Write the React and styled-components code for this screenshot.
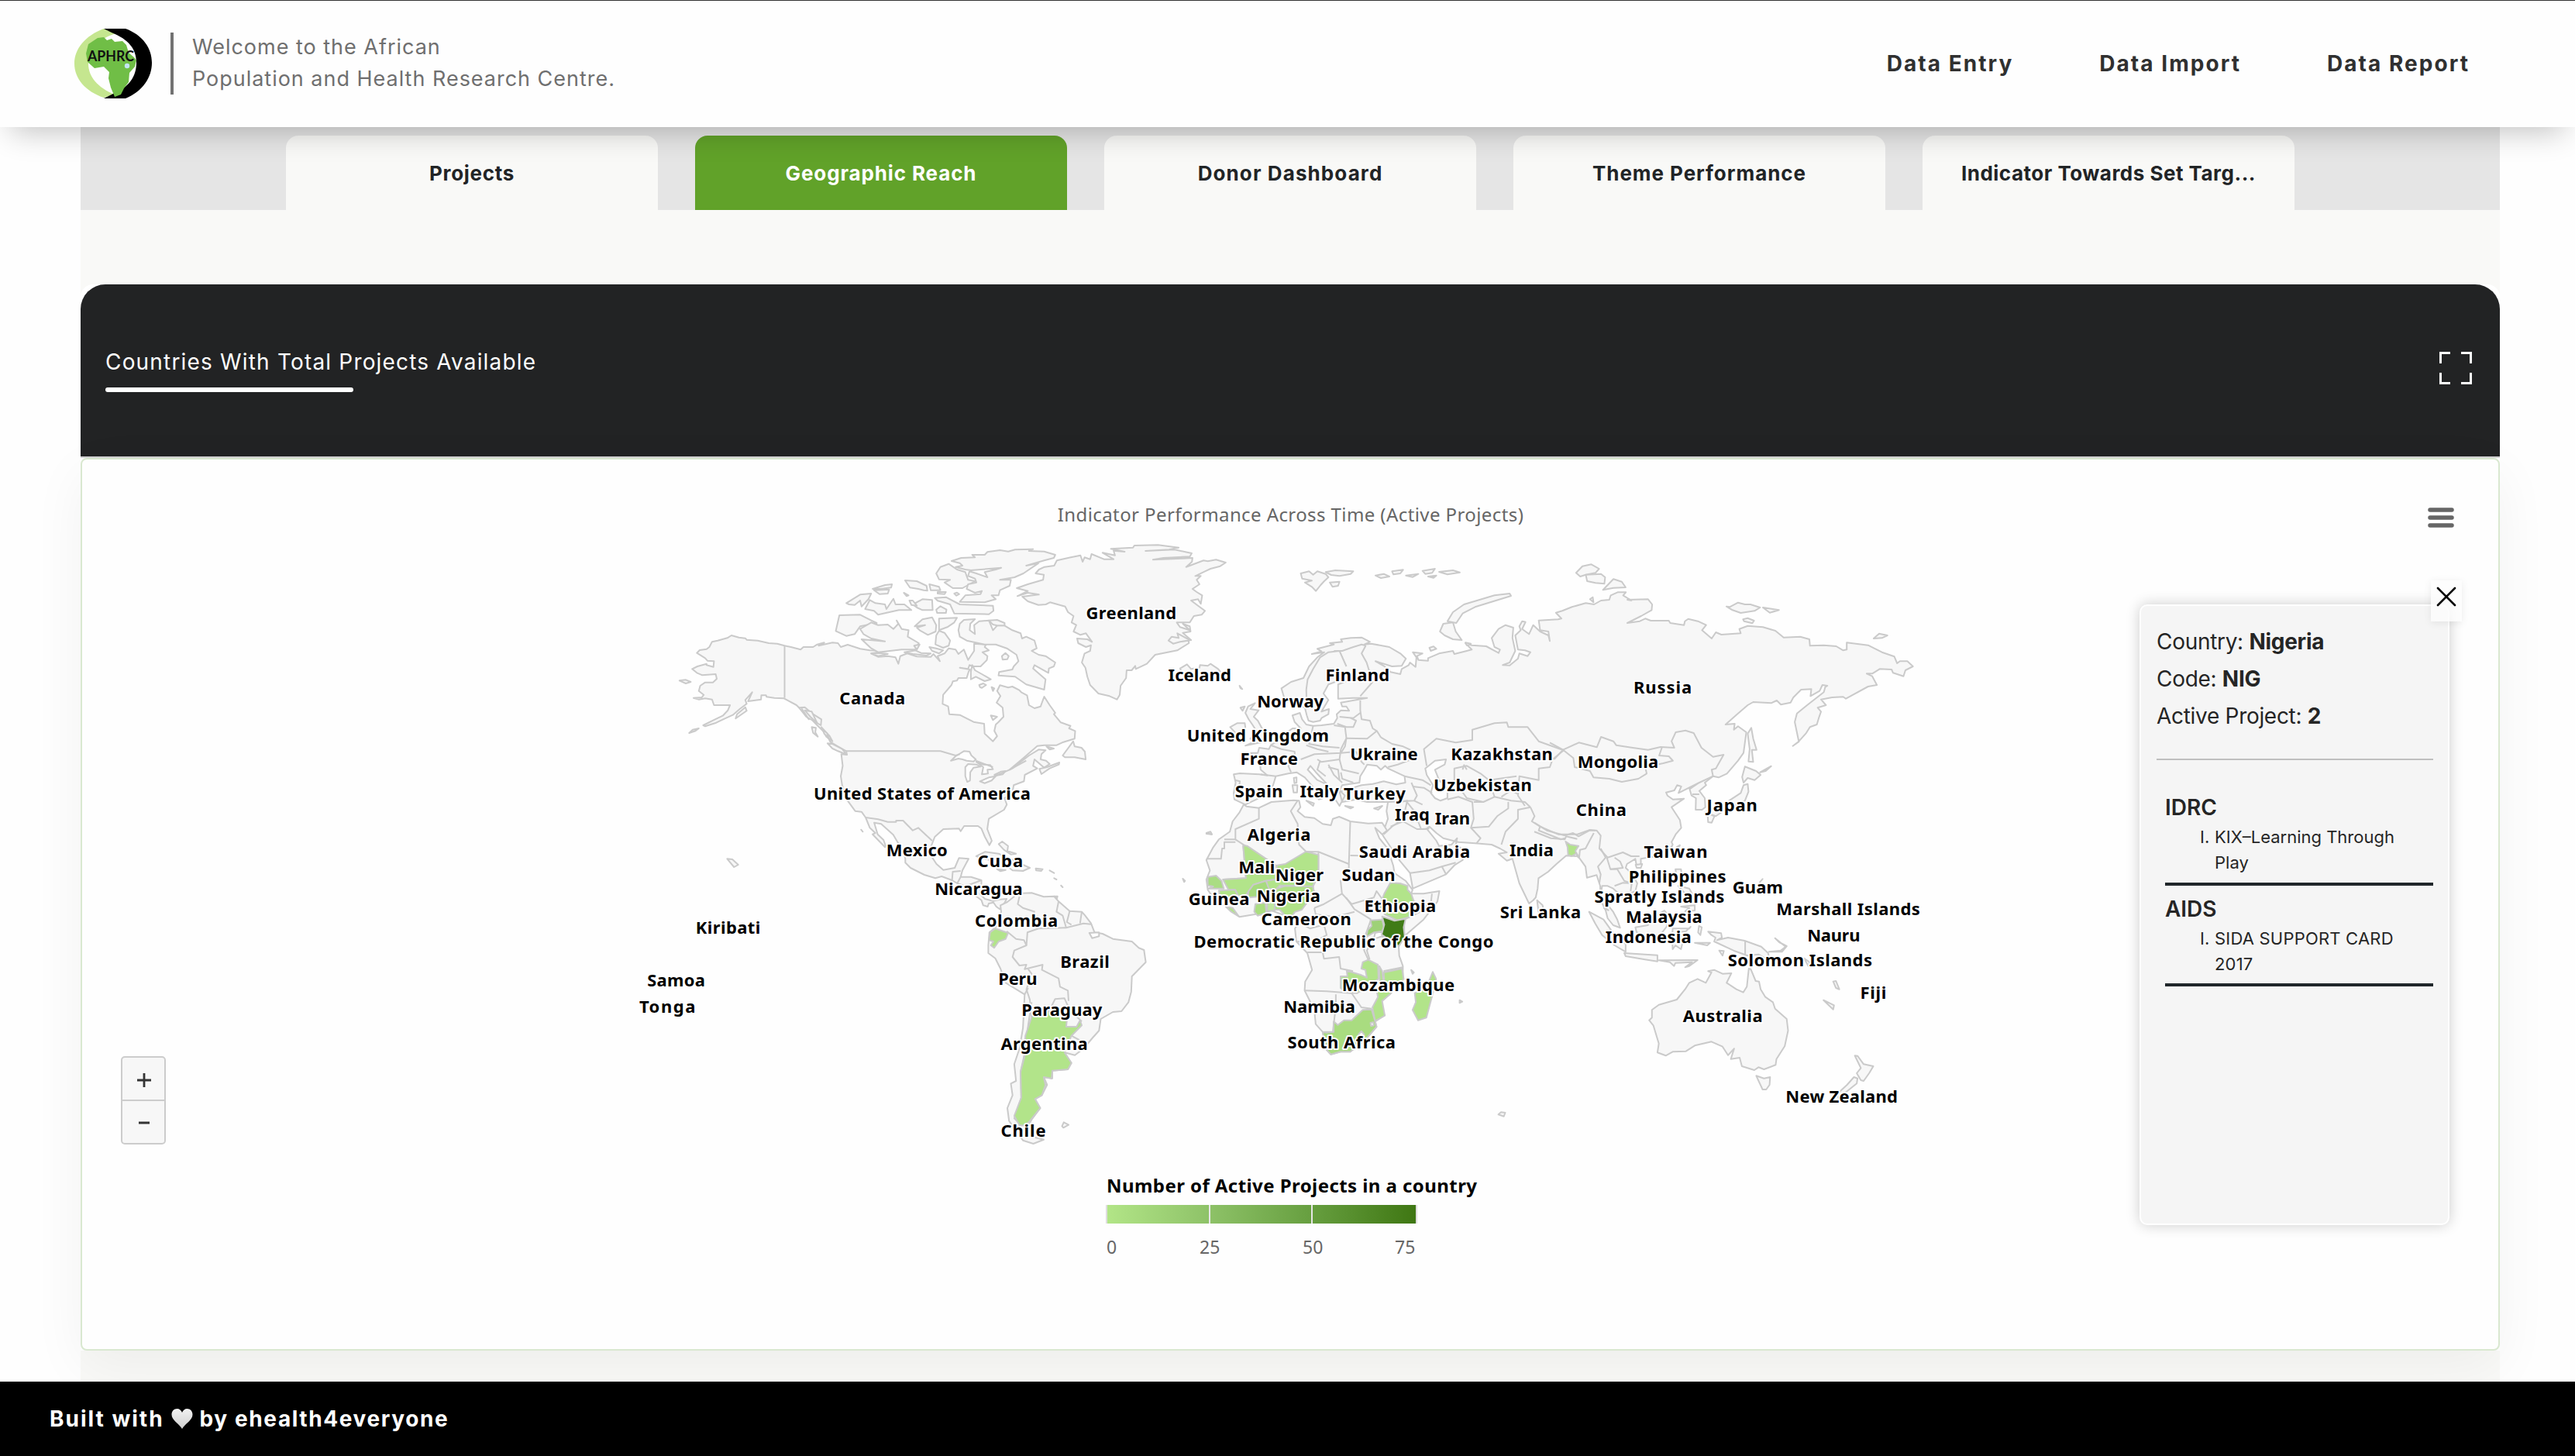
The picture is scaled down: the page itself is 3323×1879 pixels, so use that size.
import React from "react";
import styled, { createGlobalStyle } from "styled-components";

const GlobalStyle = createGlobalStyle`
  * { box-sizing: border-box; }
  body {
    margin: 0;
    background: #fefefe;
    color: #222426;
    font-family: Inter, "Noto Sans", sans-serif;
    overflow: hidden;
  }
`;

const Page = styled.div`
  display: flex;
  flex-direction: column;
  width: 3323px;
  height: 1879px;
  overflow: hidden;
`;

const Header = styled.header`
  display: flex;
  align-items: center;
  flex: 0 0 164px;
  padding: 0 138px 2px 96px;
  background: #fefefe;
  border-top: 1px solid #333;
  box-shadow: 0 20px 36px -14px rgba(0, 0, 0, 0.24);
  position: relative;
  z-index: 2;
`;

const Logo = styled.svg`
  width: 100px;
  height: 90px;
`;

const Divider = styled.div`
  width: 4px;
  height: 80px;
  margin: 0 24px 0 24px;
  background: #727272;
`;

const Welcome = styled.p`
  margin: 0 0 2px;
  font-size: 27px;
  line-height: 41px;
  letter-spacing: 0.98px;
  color: #6f6f6f;
`;

const Nav = styled.nav`
  display: flex;
  gap: 113px;
  margin-left: auto;
`;

const NavLink = styled.a`
  font-size: 28px;
  font-weight: 700;
  letter-spacing: 2.05px;
  margin-right: -2.05px;
  color: #303030;
`;

const Main = styled.main`
  display: flex;
  flex-direction: column;
  flex: 1;
  margin: 0 97px 0 104px;
  background: #f9f9f7;
  min-height: 0;
`;

const TabBar = styled.div`
  display: flex;
  align-items: flex-end;
  justify-content: center;
  gap: 48px;
  height: 107px;
  background: #e5e5e5;
`;

const Tab = styled.button`
  width: 480px;
  height: 96px;
  border: 0;
  border-radius: 16px 16px 0 0;
  font: 700 26px Inter, sans-serif;
  letter-spacing: ${(p) => p.$spacing}px;
  color: ${(p) => (p.$active ? "#fff" : "#212426")};
  background: ${(p) => (p.$active ? "#61a229" : "#f9f9f7")};
`;

const Card = styled.section`
  display: flex;
  flex-direction: column;
  height: 1376px;
  margin-top: 96px;
  background: #fff;
  border-radius: 16px 16px 0 0;
`;

const CardHeader = styled.div`
  display: flex;
  align-items: center;
  justify-content: space-between;
  height: 224px;
  padding: 0 36px 6px 32px;
  background: #222324;
  border-bottom: 2px solid #d2d2d2;
  border-radius: 32px 32px 0 0;
`;

const CardTitle = styled.h2`
  margin: 0;
  padding-bottom: 3px;
  font-size: 28px;
  font-weight: 400;
  line-height: 52px;
  letter-spacing: 1.18px;
  color: #fff;

  &::after {
    content: "";
    display: block;
    width: 320px;
    height: 6px;
    margin-top: 7px;
    border-radius: 3px;
    background: #fff;
  }
`;

const ExpandIcon = styled.svg`
  width: 42px;
  height: 42px;
`;

const ChartPanel = styled.div`
  display: flex;
  flex-direction: column;
  flex: 1;
  background: #fefefe;
  border: 2px solid #d9e8d0;
  border-radius: 8px;
  box-shadow: 0 20px 70px rgba(0, 0, 0, 0.05);
`;

const ChartHead = styled.div`
  display: grid;
  grid-template-columns: 1fr auto 1fr;
  align-items: end;
  height: 97px;
  padding: 0 57px 8px 57px;
`;

const ChartTitle = styled.h3`
  grid-column: 2;
  margin: 0 0 1px 1px;
  font: 400 24px/34px "Noto Sans", sans-serif;
  letter-spacing: 0.41px;
  color: #666;
`;

const MenuIcon = styled.svg`
  justify-self: end;
  width: 34px;
  height: 28px;
`;

const ChartBody = styled.div`
  display: grid;
  grid-template-columns: 694px 1700px 1fr;
  grid-template-rows: 808px;
  height: 808px;
`;

const ZoomGroup = styled.div`
  align-self: end;
  margin: 0 0 21px 50px;
  width: 58px;
  border: 2px solid #ccc;
  border-radius: 5px;
  background: #f7f7f7;
  overflow: hidden;
`;

const ZoomButton = styled.button`
  display: flex;
  align-items: center;
  justify-content: center;
  width: 100%;
  height: 54px;
  padding: 3px 0 0 2px;
  border: 0;
  background: transparent;

  & + & {
    height: 56px;
    padding-top: 2px;
    border-top: 2px solid #ccc;
  }
`;

const Map = styled.svg`
  width: 1700px;
  height: 808px;
  overflow: visible;
  stroke: #cacaca;
  stroke-width: 2;
  stroke-linejoin: round;
`;

const MapLabel = styled.text`
  font: 700 22px "Noto Sans", sans-serif;
  fill: #000;
  stroke: #fff;
  stroke-width: 4px;
  paint-order: stroke;
`;

const PanelWrap = styled.div`
  position: relative;
  width: 400px;
  height: 801px;
  margin: 90px 0 0 261px;
`;

const Panel = styled.aside`
  height: 801px;
  padding: 22px 19px 0 20px;
  background: #f5f5f5;
  border: 2px solid #fff;
  border-radius: 10px;
  box-shadow: 0 0 18px rgba(0, 0, 0, 0.2);
`;

const CloseButton = styled.button`
  position: absolute;
  top: -31px;
  right: -16px;
  width: 40px;
  height: 53px;
  padding: 0;
  border: 0;
  background: rgba(252, 252, 252, 0.8);
  box-shadow: 0 2px 10px rgba(0, 0, 0, 0.08);

  svg { display: block; margin: -12px auto 0; }
`;

const Fact = styled.div`
  font-size: 28px;
  line-height: 48px;
  letter-spacing: -0.3px;
  color: #252525;
`;

const Rule = styled.div`
  height: 2px;
  margin: 31px 0 40px;
  background: #bfbfbf;
`;

const Donor = styled.div`
  height: ${(p) => p.$height}px;
  margin-left: 11px;
  padding-top: ${(p) => p.$top}px;
  border-bottom: 4px solid #20262a;
`;

const DonorName = styled.div`
  font-size: 28px;
  font-weight: 600;
  line-height: 43px;
  color: #252525;
`;

const ProjectRow = styled.div`
  display: grid;
  grid-template-columns: 19px 1fr;
  padding: 0 30px 0 45px;
  font-size: 22px;
  line-height: 33px;
  letter-spacing: ${(p) => p.$spacing || 0}px;
  color: #252525;
`;

const Legend = styled.div`
  display: flex;
  flex-direction: column;
  width: 480px;
  margin: 15px 0 0 1322px;
`;

const LegendTitle = styled.div`
  font: 700 24px/34px "Noto Sans", sans-serif;
  letter-spacing: 0.43px;
  color: #000;
  white-space: nowrap;
`;

const Ramp = styled.div`
  display: grid;
  grid-template-columns: 133px 132px 133px;
  width: 402px;
  height: 24px;
  margin: 8px 0 0 -1px;
  border: solid #dedede;
  border-width: 0 2px;
  background: linear-gradient(90deg, #b2e587, #8fc369 32%, #69a142 64%, #3f7713);
`;

const RampCell = styled.div`
  border-right: ${(p) => (p.$last ? "0" : "2px solid #e6e6e6")};
`;

const RampLabels = styled.div`
  display: grid;
  grid-template-columns: 120px 133px 119px 30px;
  margin-top: 13px;
  font: 400 23px/34px "Noto Sans", sans-serif;
  color: #666;
`;

const Footer = styled.footer`
  display: flex;
  align-items: center;
  gap: 9px;
  flex: 0 0 96px;
  padding-left: 64px;
  background: #000;
  color: #fff;
  font-size: 28px;
  font-weight: 700;
  position: relative;
  z-index: 2;
`;

const FooterText = styled.span`
  letter-spacing: ${(p) => p.$spacing}px;
`;

/* Every sheet has its own origin and x/y scale; a sheet letter in a
   coordinate string switches the points that follow it. */
const SHEETS = {
  A: [860, 680, 2.8, 3],
  B: [1080, 680, 2.8, 3],
  C: [1500, 780, 2.8, 3],
  D: [2000, 700, 2.8, 3],
  E: [800, 1060, 2.24, 3],
  F: [1480, 1020, 2.8, 3],
  G: [1980, 1040, 2.8, 3],
};

function trace(source, close) {
  let sheet = SHEETS.A;
  const points = [];
  source.trim().split(/\s+/).forEach((token) => {
    if (SHEETS[token]) {
      sheet = SHEETS[token];
      return;
    }
    const [x, y] = token.split(",").map(Number);
    points.push(`${(sheet[0] + x / sheet[2]).toFixed(1)} ${(sheet[1] + y / sheet[3]).toFixed(1)}`);
  });
  return `M${points.join("L")}${close ? "Z" : ""}`;
}

const LAND = [
  // North and Central America
  `A 427,460 400,452 370,450 330,440 290,437 285,431 262,428 235,420 220,430 185,440 165,445 155,465 145,473 120,477 110,488 140,508 148,518 172,520 170,542 145,535 145,530 112,540 93,550 110,565 130,574 178,570 182,588 168,602 140,602 122,615 117,635 135,650 128,660 98,662 118,668 140,664 165,668 172,690 200,690 230,690 222,710 205,730 170,748 133,768 140,772 180,758 205,745 240,728 265,705 290,685 285,670 310,640 295,675 342,668 343,652 360,652 362,658 390,662 425,664 470,690 490,712 520,740 545,768 580,805 592,832 620,850 650,868 652,882 632,880 637,925 630,965 635,1000 655,1060 682,1100 705,1103 720,1125 735,1165 755,1185 745,1190 790,1240 E 768,95 762,72 745,50 735,5 755,10 790,52 820,120 825,145 825,160 840,180 880,207 912,220 930,213 960,228 975,240 1000,252 1025,285 1045,305 1050,325 1063,330 1066,318 1080,314 1088,330 1098,340 1110,320 1118,300 1098,302 1078,308 1055,300 1040,280 1045,240 1045,228 1015,215 985,215 990,190 1000,165 1008,145 980,142 968,180 935,188 915,165 903,140 900,95 910,60 935,30 980,28 985,38 995,18 1035,18 1045,28 1055,60 1068,92 1075,75 1062,30 A 1162,1150 1165,1130 1220,1095 1230,1075 1222,1050 1250,1030 1255,1000 1292,985 1295,960 1340,935 1325,925 1330,900 1365,932 1385,918 1372,905 1352,900 1355,880 1370,865 1345,862 1310,885 1250,935 1240,940 1290,895 1340,848 1365,845 1410,845 1430,835 1475,820 1477,790 1455,780 1460,770 1425,757 1400,725 1405,720 1385,690 1365,657 1352,695 1330,702 1310,690 1303,652 1282,640 1275,632 1250,618 1235,622 1205,613 1195,635 1207,655 1193,680 1215,700 1218,735 1200,755 1190,765 1185,790 1195,810 1180,830 1150,800 1148,762 1110,755 1060,728 1022,725 1018,695 998,685 1000,650 1030,612 1035,598 1050,595 1055,585 1085,585 1092,560 1097,552 1060,545 1090,550 1095,535 1110,540 1135,540 1158,515 1160,500 1142,485 1165,478 1150,465 1155,455 1112,452 1112,480 1090,515 1075,475 1055,492 1045,475 1020,470 1005,490 980,500 988,520 965,492 955,503 905,502 870,490 845,500 838,530 828,505 800,500 765,503 740,490 800,480 735,478 700,472 655,456 630,465 620,450 600,448 550,460 570,448 545,455 530,465 495,465 485,475 450,465`,
  `A 625,342 700,340 740,362 760,372 700,385 680,415 650,422 612,403`,
  `A 740,370 765,380 800,378 820,395 838,375 832,362 850,395 875,400 872,425 912,450 900,475 850,475 765,485 740,470 705,435 790,443 740,432 712,415 700,395`,
  `A 650,295 700,262 740,258 730,280 705,308 700,285 680,302 660,300`,
  `A 718,318 735,283 755,295 790,300 795,318 820,278 828,300 860,300 885,322 840,322 765,340 750,325`,
  `A 745,240 790,225 815,222 812,235 775,240`, `A 750,245 805,242 800,258 770,260`,
  `A 862,207 905,210 940,228 943,247 930,245 910,240 880,235`, `A 950,222 985,232 990,245 955,245`,
  `A 858,255 875,265 868,268`, `A 980,252 1010,252 1005,260 980,258`, `A 1040,258 1050,254 1058,260 1048,266`,
  `A 975,180 990,155 1020,143 1050,165 1080,175 1090,205 1115,210 1070,237 1035,237 1005,215 1025,205 985,203`,
  `A 1030,132 1065,120 1115,118 1105,108 1150,108 1160,97 1205,90 1235,95 1260,88 1325,86 1310,93 1365,95 1405,108 1400,120 1365,130 1300,150 1345,140 1290,180 1258,195 1205,205 1245,205 1240,228 1205,245 1200,265 1175,265 1190,280 1150,292 1060,290 1080,265 1135,260 1140,248 1115,255 1085,240 1090,222 1120,215 1115,200 1090,190 1095,172 1120,180 1160,195 1150,175 1190,165 1210,158 1100,168 1080,165 1045,155 1070,150 1060,140`,
  `A 970,275 1010,272 1060,300 1180,305 1182,325 1165,338 1040,335 1025,300 1000,292 980,286`,
  `A 890,300 925,280 960,283 962,322 925,322 905,312 `, `A 878,285 890,285 905,305 885,302`,
  `A 975,320 990,307 1012,320 1010,333 978,333`,
  `A 897,385 925,358 960,350 975,380 973,405 945,418 915,400 905,390 935,380`,
  `A 985,355 1050,352 1040,370 1015,388 985,400`,
  `A 985,402 1005,410 1025,440 1020,460 1000,468 972,455 975,420`,
  `A 1055,400 1060,375 1075,360 1115,357 1098,375 1096,400 1115,415 1112,380 1130,365 1165,362 1180,400 1195,382 1222,382 1250,400 1280,412 1285,432 1300,425 1330,440 1338,470 1320,480 1345,495 1370,500 1405,525 1400,540 1382,548 1380,565 1330,535 1325,548 1370,590 1365,630 1300,610 1260,580 1200,575 1202,562 1250,552 1255,540 1272,520 1265,495 1230,470 1190,455 1150,455 1085,440 1060,425`,
  `A 1165,362 1195,360 1222,372 1222,382 1195,382 1180,378`,
  `A 1105,535 1115,555 1140,570 1172,590 1150,597 1118,580 1100,590 1100,560`,
  `A 1130,612 1145,606 1155,612 1140,623 1133,620`, `A 1212,500 1225,488 1237,500 1232,512 1215,514`, `A 1175,620 1185,625 1180,635`, `A 1172,730 1195,735 1180,748`,
  `A 740,490 770,488 800,492 765,500`, `A 860,485 900,478 920,488 955,490 940,498 890,492`, `A 895,460 915,455 905,475`, `A 950,465 975,470 1000,478 985,490 960,480`,
  `A 1432,885 1470,830 1475,850 1500,855 1512,870 1515,900 1475,892 1440,892`,
  `A 1348,937 1375,930 1420,912 1418,920 1385,935 1355,957`,
  `A 1373,850 1400,858 1385,862`,
  `A 582,838 600,840 635,860 652,882 620,868 600,858`, `A 47,595 70,592 88,600 70,606`, `A 82,798 95,785 117,780 105,790`, `A 250,742 255,725 285,698 290,712`, `A 525,775 540,778 538,795 547,812 530,797`,
  `A 480,700 500,698 530,725 560,745 558,768 530,750 505,735`, `A 500,710 525,715 545,760 520,735`, `A 490,705 515,745 500,725`, `A 560,775 590,810 600,830 578,812`, `A 565,785 580,798 588,820 570,800`,
  // Greenland and Iceland
  `B 650,237 690,222 745,205 748,185 718,180 730,165 750,155 785,150 795,130 845,118 880,110 888,135 895,118 915,125 920,105 965,125 1000,125 960,100 1005,110 1000,92 1040,96 990,85 1070,80 1075,72 1160,70 1235,80 1200,88 1115,93 1220,88 1282,102 1275,115 1180,120 1142,127 1250,122 1285,120 1283,135 1262,155 1325,130 1340,133 1370,127 1405,138 1385,152 1350,162 1330,172 1295,190 1315,190 1300,205 1310,222 1285,240 1300,252 1320,265 1315,298 1305,280 1280,285 1305,305 1330,325 1318,340 1290,345 1275,370 1228,370 1240,388 1275,400 1250,375 1275,385 1278,405 1250,410 1280,438 1240,445 1215,452 1198,440 1210,425 1235,430 1230,412 1270,435 1272,450 1230,478 1150,495 1120,530 1080,550 1078,538 1065,555 1047,555 1045,585 1025,615 1022,650 1012,668 985,655 945,645 915,612 905,580 898,545 885,525 895,490 915,480 918,458 900,465 872,450 868,432 905,435 922,445 900,412 880,418 855,405 865,380 848,370 855,345 835,330 825,308 770,292 755,300 728,302 690,288 670,270 730,262 690,255 652,268 690,248`,
  `B 1240,548 1265,532 1280,550 1310,545 1312,535 1340,538 1350,530 1378,550 1385,560 1340,580 1280,582 1245,560`,
  `B 1455,615 1465,628 1458,624`, `B 1335,1188 1350,1182 1355,1190`,
  // British Isles and Mediterranean islands
  `C 310,395 335,382 318,405 348,410 330,435 345,450 360,480 378,500 372,530 300,547 335,530 318,520 340,490 325,465 312,445 300,420`,
  `C 245,475 270,460 298,460 300,475 290,520 255,525 262,495`, `C 282,400 298,395 290,412`,
  `C 475,672 485,670 485,690 477,692`, `C 470,700 488,700 487,728 474,728`, `C 520,760 548,770 545,780`, `C 660,780 690,785 680,790`, `C 765,790 795,780 780,795`,
  // Europe, Asia
  `C 258,658 280,654 350,658 380,662 355,640 352,600 330,590 318,575 345,575 350,555 385,560 392,545 430,520 445,500 470,480 500,480 478,455 470,430 497,420 505,445 520,465 545,470 575,468 620,462 632,440 630,425 645,410 675,412 665,395 650,395 645,380 700,370 740,362 690,362 635,365 635,310 680,290 650,270 628,290 625,300 600,310 582,345 600,370 575,415 602,405 600,425 575,440 570,450 545,455 528,450 522,430 515,400 440,360 430,325 465,300 510,285 530,240 560,205 585,185 540,192 575,182 560,172 620,155 605,150 650,145 645,135 680,130 720,128 750,145 730,155 755,152 820,165 860,190 880,210 865,238 830,240 770,220 800,238 825,262 860,270 865,250 890,235 895,225 915,242 918,205 905,185 940,190 920,200 925,215 960,218 960,208 1000,190 1050,180 1055,192 1100,180 1118,175 1095,150 1118,158 1170,162 1215,188 1220,175 1200,165 1190,130 1215,95 1240,80 1268,90 1265,130 1275,180 1255,225 1230,235 1255,236 1285,210 1290,190 1320,200 1330,185 1310,178 1285,175 1275,120 1295,100 1290,85 1300,65 1312,68 1300,95 1325,115 1340,80 1365,105 1395,120 1400,142 1395,105 1365,100 1360,62 1430,58 D 42,295 22,272 45,265 80,250 130,235 160,240 185,225 215,222 220,205 245,193 275,193 265,205 295,225 280,222 355,220 370,240 368,262 330,285 280,312 325,305 345,295 365,303 430,303 435,312 485,320 488,305 500,296 535,305 565,320 550,340 585,372 600,348 620,357 690,352 685,335 715,323 770,328 815,342 845,368 905,365 938,375 940,400 990,398 1035,402 1060,418 1073,415 1073,388 1150,398 1200,425 1245,442 1255,468 1265,460 1292,460 1312,480 1285,495 1278,518 1240,505 1235,492 1192,490 1165,508 1145,508 1165,518 1182,552 1150,558 1070,605 1060,598 1020,600 980,608 998,630 968,640 980,655 972,680 965,705 940,715 925,740 900,770 878,788 900,772 885,695 893,662 930,630 990,580 995,560 1003,555 985,552 975,575 942,595 945,568 908,570 880,600 870,620 835,628 820,612 800,622 735,618 715,630 680,662 635,705 668,702 665,725 680,712 710,735 700,815 680,845 640,895 610,910 590,905 560,930 565,940 540,962 560,990 562,1025 550,1035 527,1035 528,990 512,980 505,955 540,930 465,970 475,945 460,940 450,960 420,968 425,980 445,995 485,992 440,1025 455,1050 470,1075 475,1105 455,1130 440,1160 G 500,150 485,180 440,195 385,205 385,225 370,235 365,205 335,225 330,240 355,265 372,300 365,330 335,345 320,355 305,340 285,320 265,310 245,310 240,345 255,370 285,410 300,440 310,472 285,462 265,435 258,405 240,365 238,310 225,268 190,278 185,235 165,205 155,195 115,193 80,225 50,255 15,280 12,320 5,355 C 1340,1145 1325,1158 1290,1080 1265,985 1245,992 1215,965 1245,960 1220,945 1190,930 1130,925 1070,920 1015,905 990,885 965,860 955,868 990,915 1000,935 1045,930 1065,905 1060,930 1095,955 1085,990 1055,1010 1025,1045 905,1100 895,1040 860,995 800,900 795,890 815,830 810,800 815,765 740,765 700,755 650,765 640,725 720,700 760,695 800,685 845,697 878,690 875,665 815,635 805,625 790,640 775,625 740,620 730,640 715,665 712,690 650,700 640,720 660,740 640,780 625,755 605,710 590,690 555,650 535,625 525,640 560,680 600,700 590,720 575,712 580,750 565,755 555,720 515,670 485,650 455,655 410,665 400,700 380,730 340,755 300,775 260,755 258,730 265,690`,
  `C 1003,105 1015,75 1050,70 1060,105 1082,138 1050,135 1020,120`, `C 1030,65 1050,30 1090,0 1200,-35 1255,-42 1260,-33 1130,10 1085,35 1062,72`,
  `C 965,168 980,163 990,172 970,180`, `C 1095,148 1115,152 1100,158`,
  `D 95,118 118,92 150,85 178,102 165,118 130,125 110,132`, `D 130,125 185,122 200,135 197,160 165,157 135,150`, `D 192,184 230,142 260,152 274,174 230,176`,
  `D 145,220 155,212 158,232`, `D 638,248 650,250 680,233 705,240 725,240 760,252 740,265 690,273 660,262`, `D 770,252 828,262 795,272`, `D 698,298 715,293 738,303 732,313 702,305`, `D 1170,372 1190,353 1220,360 1200,370`,
  `D 715,740 728,718 735,760 747,803 730,803 735,850 718,848 722,800`, `D 705,868 745,885 762,900 740,920 715,912 700,930 695,908`, `D 760,890 800,866 780,885`, `D 700,940 715,935 718,965 705,1000 680,1015 640,1030 600,1060 560,1045 620,1020 655,995 690,970`, `D 570,1050 595,1060 585,1085 572,1083`,
  `D 458,1180 470,1172 462,1195`,
  // Svalbard and Franz Josef Land
  `C 500,-120 530,-128 545,-115 560,-128 590,-118 600,-105 585,-90 572,-75 555,-52 540,-68 515,-85 540,-92 505,-100`, `C 590,-125 625,-132 690,-128 680,-118 640,-110 610,-114`, `C 605,-85 640,-88 635,-72 615,-68`,
  `C 770,-112 800,-118 820,-108 790,-102`, `C 830,-128 870,-134 860,-120 835,-116`, `C 880,-112 925,-118 905,-106`, `C 940,-130 985,-138 975,-122 950,-118`, `C 1000,-126 1050,-132 1075,-124 1030,-116`, `C 960,-108 990,-112 980,-103`,
  // Africa
  `F 350,55 360,62 405,68 450,45 530,38 550,40 555,65 545,80 570,103 605,107 635,130 665,135 672,110 695,102 735,120 800,128 850,125 868,155 850,170 825,145 840,185 870,225 890,290 895,320 935,350 960,385 955,400 1000,400 1057,390 1050,430 1000,500 930,565 910,605 912,640 925,680 925,730 880,785 850,815 840,840 860,870 825,895 830,915 790,965 735,1012 700,1012 665,1022 650,1005 635,935 610,905 605,850 570,775 572,740 597,695 580,630 540,585 535,535 550,510 535,482 500,485 450,465 390,480 335,490 300,460 240,415 220,385 215,345 228,310 215,270 240,220 260,190 300,160 310,120 335,85`,
  `F 215,165 230,160 235,170`, `F 130,342 138,350 135,355`, `F 955,695 965,705 960,710`, `F 1130,812 1140,818 1130,823`, `F 1270,1255 1280,1246 1295,1248 1290,1262`,
  // Oceania and Southeast Asia
  `G 425,790 450,770 515,750 545,710 560,685 590,670 620,685 640,645 628,640 650,635 680,650 712,648 695,685 730,710 755,722 768,700 775,630 782,632 800,678 812,680 818,710 835,740 862,760 870,785 912,825 917,870 905,930 875,980 872,1003 830,1020 810,1012 795,1023 750,1008 742,975 710,980 722,940 700,965 680,932 640,913 580,928 548,950 500,952 475,967 445,955 450,920 430,850 415,830 425,820`,
  `G 802,1045 830,1055 852,1050 850,1080 838,1098 825,1098`,
  `G 1158,967 1168,968 1190,1000 1225,1008 1210,1035 1190,1065 1180,1062 1165,1035 1180,1015`, `G 1155,1050 1168,1055 1165,1075 1130,1105 1100,1130 1090,1120 1130,1080`,
  `G 198,410 250,440 290,500 330,535 330,565 290,540 245,500 220,455`, `G 325,570 400,575 445,578 445,602 400,595 330,582`, `G 450,598 590,597 560,620 545,625 570,605 510,608 505,620 490,605`,
  `G 365,470 410,462 440,425 470,405 485,425 480,465 455,500 400,500 370,490`, `G 500,475 560,475 565,468 548,485 515,490 540,510 530,555 510,540 500,555 498,510`, `G 595,465 605,470 600,500 592,490`, `G 580,530 635,530 625,540`,
  `G 628,487 675,493 678,510 660,520 700,510 760,522 820,545 845,570 850,600 810,575 770,580 720,560 650,525 655,510 640,500`, `G 848,565 890,560 908,545 870,512 885,528 912,543 895,565`, `G 668,560 685,562 680,580`,
  `G 510,245 530,245 535,290 515,275`, `G 520,310 560,320 570,340 550,345`, `G 530,390 580,385 580,405 545,408 560,395`, `G 1080,680 1090,678 1102,710 1090,705`, `G 1045,752 1083,772 1080,788`, `G 975,590 995,605 990,620`, `G 815,295 825,283`, `G 10,365 30,385 35,410 15,410`, `G 366,228 390,225 385,240 370,240`,
  // South America and Caribbean
  `E 1100,325 1120,312 1145,285 1165,278 1190,277 1225,292 1255,290 1268,310 1300,347 1335,350 1345,365 1362,395 1372,430 1395,435 1425,455 1480,465 1500,490 1515,498 1520,545 1480,600 1478,660 1470,700 1450,735 1425,738 1390,765 1385,810 1365,840 1340,880 1315,905 1285,895 1305,935 1295,960 1250,965 1250,995 1225,990 1235,1020 1220,1060 1200,1075 1215,1110 1190,1155 1180,1180 1190,1220 1225,1232 1195,1248 1165,1235 1125,1160 1120,1110 1135,1060 1130,1015 1145,1005 1140,940 1155,880 1165,800 1170,670 1115,625 1100,570 1085,530 1065,510 1065,480 1068,430 1095,400 1102,350`,
  `E 1030,135 1055,118 1095,125 1160,165 1185,180 1165,192 1135,190 1110,165`, `E 1095,88 1105,78 1122,95 1120,115 1145,125 1130,128 1110,110`, `E 1090,185 1115,188 1100,193`, `E 1202,182 1222,185 1218,192 1203,190`, `E 1278,1180 1283,1165 1297,1175 1282,1186`, `E 310,145 325,147 342,168 330,177`, `E 1255,290 1265,290 1263,300`, `E 1275,248 1280,255`, `E 1255,220 1262,225`, `E 1242,190 1255,200`, `E 697,32 702,40`,
];

const WATER = [
  `A 1028,905 1045,888 1075,868 1095,870 1102,885 1118,900 1110,908 1085,905 1070,900 1055,897`,
  `A 1080,930 1090,918 1120,920 1135,928 1110,932 1098,950 1097,982 1087,987 1080,965`,
  `A 1120,910 1145,920 1170,922 1180,938 1160,940 1162,955 1140,958 1145,930`,
  `A 1133,985 1165,970 1190,965 1175,982 1150,992`,
  `A 1185,960 1210,947 1225,945 1215,958 1190,963`,
  `C 985,605 1025,600 1020,620 985,640 1000,680 1030,715 1030,750 1005,760 985,750 970,730 978,700 955,660 950,635`,
  `F 825,552 855,545 850,565 820,575`,
  `E 1357,432 1385,430 1385,445 1365,452`,
];

const BORDERS = [
  `A 427,460 427,662`, `A 650,868 990,868 1045,885 1060,880`, `A 1118,905 1180,930`, `A 1190,963 1240,940 1300,905`,
  `A 720,1125 765,1132 800,1142 830,1142 830,1137 855,1137 890,1175 910,1165 960,1215`,
  `E 960,228 962,195 985,192`, `E 985,215 975,240`, `E 1045,228 1010,245 1000,252`, `E 1155,290 1150,320 1165,335 1200,350`, `E 1268,310 1262,350 1280,365 1290,412 1340,395 1362,398`, `E 1300,347 1292,390 1305,400`, `E 1335,350 1330,395`, `E 1118,425 1145,455 1168,460 1175,480 1140,500 1135,525 1155,558 1175,555 1170,572 1222,555 1220,575 1268,608 1272,640 1295,655 1297,695`, `E 1175,480 1178,430 1210,415 1290,412`, `E 1180,572 1190,590 1175,650 1185,690 1190,758`, `E 1180,645 1170,670`, `E 1248,715 1258,688 1285,685 1300,730 1335,775`, `E 1305,830 1340,855`,
  `E 1190,700 1180,790 1168,910 1158,970 1160,1070 1140,1150 1162,1180`,
  // Europe
  `C 355,658 410,665`, `C 392,545 430,560 478,570 480,600 455,625 465,650`, `C 520,330 525,290 545,250 570,205 600,185 640,180 665,240`, `C 520,330 522,400`, `C 620,180 650,180 690,165 720,155 735,160`, `C 735,160 720,190 738,225 760,300 715,355`, `C 715,372 715,410 720,445 750,450 760,480 775,490 740,520 665,518`, `C 640,435 690,440 715,420`, `C 632,462 665,475 690,475 700,450 680,440`, `C 620,468 660,475 665,518 645,560`, `C 545,470 530,540 580,550 640,555`, `C 500,600 550,580 645,575 700,570`, `C 520,545 560,560 600,570`, `C 645,560 640,600 575,610 560,600`, `C 640,600 650,640 710,655`, `C 600,620 620,660 650,690`, `C 645,650 650,675 690,690`, `C 700,570 720,610 730,620`, `C 665,518 660,550 645,575`, `C 570,605 560,640 590,665`, `C 600,630 635,640 640,680`, `C 790,515 830,540 870,550 910,570 900,600 850,620 815,630`, `C 775,490 790,515`, `C 262,680 280,685 275,720`,
  // Middle East and Asia
  `C 875,665 940,680 970,700`, `C 900,690 920,740 910,760 815,765`, `C 905,705 945,710 975,730`, `C 860,765 885,760 870,830 830,860 800,890`, `C 880,760 910,800 935,870 965,868`, `C 910,760 940,775`, `C 825,860 870,840 920,870 960,870`, `C 1030,755 1070,745 1120,765 1125,830 1115,865 1150,905 1135,925`, `C 1125,765 1160,765 1200,745 1260,760 1310,765 1330,785`, `C 1115,865 1180,860 1210,820 1250,790 1250,765`, `C 1330,785 1285,795 1285,830 1240,880 1225,930`, `C 1330,785 1345,820 1335,840 1365,860 1430,890 1500,890 1545,873 1565,875`, `C 1365,860 1360,875 1440,910 1455,905`, `C 895,1040 965,1030 1010,1015 1060,1000`, `C 1010,1015 1025,1045`, `C 955,625 945,560 990,520 1060,535 1120,525 1120,485 1200,460 1245,457 1250,475 1320,475 1360,530 1450,565`, `C 1450,565 1410,600 1400,630 1360,635 1360,680 1290,665 1285,740 1310,780`, `C 1055,690 1055,635 1100,625 1150,655 1180,680 1280,665`, `C 1060,690 1100,750 1160,765`, `C 1100,640 1090,622 1085,640`, `C 1180,680 1200,745`, `C 1225,745 1260,720 1285,735`,
  `D 48,803 105,775 170,793 185,753 230,770 240,785 300,795 355,803 400,792 450,795 440,770 455,735 490,728 520,738 548,795 590,830 628,822 600,875 585,880 590,905`, `D 48,803 85,835 90,870 145,885 158,910 215,915 260,927 320,915 350,895 345,870 410,855 445,845 430,828 395,825 405,795`, `D 0,775 48,803 15,840`, `D 540,975 515,975`, `D 590,905 540,930`,
  `G 0,65 45,95 110,115 140,105 160,118 200,95 225,95 240,115 235,165 265,200 320,180 350,195 380,195`, `G 0,100 60,125 110,130 115,118 155,128`, `G 215,105 200,135 185,165 165,170 162,200`, `G 240,165 258,200 230,235 240,265 235,300`, `G 262,200 275,245 320,240 310,215 290,200`, `G 275,245 300,245 325,290 350,300`, `G 290,310 320,298 352,300 348,330`, `G 762,522 762,580`, `G 250,395 270,405`,
  // Africa
  `F 405,68 405,110 320,150 320,190 280,190`, `F 215,265 268,265 272,225 280,225 280,200 320,200`, `F 320,190 465,290`, `F 545,40 520,80 545,130 550,210 575,237`, `F 575,237 620,238 730,285 735,120`, `F 735,252 860,255`, `F 275,345 358,340 348,215`, `F 730,285 730,320 700,350 705,400 640,440 605,455`, `F 620,238 620,330 600,372 605,400`, `F 705,400 740,440 820,415 830,390 850,420`, `F 720,415 750,460 810,500`, `F 605,455 610,480 680,490 750,470`, `F 550,510 590,535 640,520 650,560 600,590 540,585`, `F 810,500 790,560 785,620 800,655`, `F 580,627 635,627 640,652 695,645 700,690 745,700`, `F 570,775 650,778 740,785`, `F 683,790 683,835 672,935 640,935`, `F 740,785 775,840 812,845`, `F 740,785 800,770 830,775`, `F 850,565 905,603`, `F 855,700 925,685`, `F 1030,400 1025,450 950,490 930,500 930,565`, `F 805,600 795,620 805,655`,
];

const ACTIVE = [
  ["#b2e48a", `F 348,212 362,215 465,290 465,345 430,350 385,365 355,410 330,408 320,385 295,385 275,345 358,340`],
  ["#b2e48a", `F 470,290 500,285 575,237 620,250 620,305 600,372 480,368 465,385 440,380 430,350 465,345`],
  ["#a7db7e", `F 365,415 368,390 385,365 430,350 440,378 450,390 400,412`],
  ["#aadd83", `F 220,335 250,330 270,350 278,380 222,380 240,372 220,368`],
  ["#b2e48a", `F 260,388 318,385 330,408 330,445 300,430 265,415`],
  ["#b2e48a", `F 285,450 310,455 332,488 305,470`],
  ["#abde80", `F 392,440 428,435 432,475 400,485 388,470`],
  ["#c0e8a2", `F 436,400 462,385 462,465 434,468`],
  ["#b0e287", `F 470,380 500,370 600,372 605,400 575,440 560,462 535,470 525,485 500,485 480,462 462,462 462,400`],
  ["#b2e48a", `F 880,358 915,360 942,370 942,385 955,400 965,430 1015,450 950,490 905,503 860,480 840,450 858,400`],
  ["#9ed177", `F 808,503 850,500 857,530 850,545 820,550 792,568 798,540 812,525`],
  ["#407b17", `F 850,488 895,505 935,497 928,530 932,568 910,603 885,585 848,558 858,520`],
  ["#b2e48a", `F 780,665 800,656 835,675 837,730 800,755 760,785 720,782 700,765 700,720 725,720 722,698 775,715 795,725 790,695 775,690`],
  ["#b2e48a", `F 840,680 850,700 855,755 842,735`],
  ["#b2e48a", `F 856,705 922,690 928,730 880,788 850,815 860,872 825,893 815,840 835,800 830,770 860,765`],
  ["#b2e48a", `F 1033,703 1045,730 1040,760 1010,880 980,890 960,850 972,820 968,785 1010,765`],
  ["#a9dc80", `F 635,935 650,938 675,935 675,895 690,908 712,890 740,890 780,850 812,848 825,895 830,915 790,965 735,1012 700,1012 665,1022 650,1005`],
  ["#b2e48a", `G 113,138 130,150 160,155 148,175 162,200 150,185 135,195 122,190 120,160`],
  ["#b2e48a", `E 1190,758 1200,738 1240,735 1292,770 1290,795 1320,795 1330,770 1335,790 1305,830 1285,895 1305,935 1295,960 1250,965 1248,995 1225,990 1230,1020 1220,1060 1200,1075 1215,1110 1185,1160 1170,1178 1155,1176 1140,1140 1160,1070 1158,970 1170,910 1172,830`],
  ["#b2e48a", `E 1085,415 1122,432 1115,455 1095,465 1082,490 1072,480 1080,465 1067,460 1070,430`],
  ["#f7f7f7", `F 765,945 775,932 785,945 770,955`],
  ["#f7f7f7", `F 808,900 818,898 820,910 810,912`],
];

const LABELS = [
  ["A", "Canada", 628, 860, 686], ["A", "United States of America", 535, 1313, 1057],
  ["B", "Greenland", 903, 1224, 356], ["B", "Iceland", 1200, 1422, 597],
  ["C", "Finland", 592, 818, 297], ["C", "Norway", 345, 580, 399], ["C", "United Kingdom", 92, 599, 531],
  ["C", "France", 284, 487, 620], ["C", "Ukraine", 681, 920, 602], ["C", "Kazakhstan", 1045, 1408, 602],
  ["C", "Uzbekistan", 983, 1332, 722], ["C", "Spain", 265, 433, 746], ["C", "Italy", 500, 635, 746],
  ["C", "Turkey", 658, 876, 757], ["C", "Iraq", 843, 963, 837], ["C", "Iran", 988, 1109, 853],
  ["C", "Algeria", 310, 533, 914], ["C", "Saudi Arabia", 713, 1109, 980], ["C", "India", 1257, 1411, 974],
  ["C", "Mali", 278, 404, 1040], ["C", "Niger", 411, 580, 1070], ["C", "Sudan", 651, 839, 1070],
  ["C", "Guinea", 97, 312, 1165], ["C", "Nigeria", 344, 568, 1153], ["C", "Ethiopia", 732, 986, 1190],
  ["C", "Cameroon", 360, 680, 1243], ["C", "Sri Lanka", 1223, 1510, 1214],
  ["F", "Democratic Republic of the Congo", 172, 1250, 608], ["F", "Mozambique", 708, 1109, 776],
  ["F", "Namibia", 496, 750, 860], ["F", "South Africa", 511, 896, 998],
  ["D", "Russia", 305, 510, 584], ["D", "Mongolia", 103, 390, 873], ["D", "China", 97, 274, 1058],
  ["D", "Japan", 570, 747, 1041], ["D", "Taiwan", 343, 567, 1220],
  ["G", "Philippines", 344, 690, 297], ["G", "Guam", 719, 896, 338], ["G", "Spratly Islands", 220, 684, 374],
  ["G", "Marshall Islands", 877, 1391, 422], ["G", "Malaysia", 333, 604, 453], ["G", "Nauru", 989, 1175, 525],
  ["G", "Indonesia", 260, 565, 530], ["G", "Solomon Islands", 702, 1218, 620], ["G", "Fiji", 1180, 1269, 747],
  ["G", "Australia", 540, 822, 836], ["G", "New Zealand", 911, 1310, 1149],
  ["E", "Mexico", 772, 945, 134], ["E", "Cuba", 1036, 1163, 177], ["E", "Nicaragua", 912, 1162, 285],
  ["E", "Kiribati", 221, 404, 434], ["E", "Colombia", 1028, 1264, 409], ["E", "Samoa", 81, 244, 638],
  ["E", "Tonga", 58, 216, 740], ["E", "Brazil", 1275, 1413, 567], ["E", "Peru", 1096, 1204, 633],
  ["E", "Paraguay", 1163, 1392, 753], ["E", "Argentina", 1103, 1350, 884], ["E", "Chile", 1103, 1229, 1220],
];

const TABS = [
  ["Projects", 0.7], ["Geographic Reach", 0.87], ["Donor Dashboard", 1.1],
  ["Theme Performance", 0.95], ["Indicator Towards Set Targ...", 0.49],
];

function WorldMap() {
  return (
    <Map viewBox="800 690 1700 808">
      {LAND.map((s, i) => <path key={i} d={trace(s, true)} fill="#f7f7f7" />)}
      {WATER.map((s, i) => <path key={i} d={trace(s, true)} fill="#fefefe" />)}
      {BORDERS.map((s, i) => <path key={i} d={trace(s, false)} fill="none" />)}
      {ACTIVE.map(([color, s], i) => <path key={i} d={trace(s, true)} fill={color} />)}
      {LABELS.map(([k, text, x1, x2, y]) => {
        const [ox, oy, sx, sy] = SHEETS[k];
        return (
          <MapLabel key={text} x={ox + x1 / sx - 1} y={oy + y / sy} textLength={(x2 - x1) / sx + 2}>
            {text}
          </MapLabel>
        );
      })}
    </Map>
  );
}

function AphrcLogo() {
  return (
    <Logo viewBox="0 0 100 90">
      <path d="M38 0C14 9 0 26 0 45s14 36 38 44l14-4C30 76 18 62 18 45S30 13 54 6z" fill="#c5e68f" />
      <path d="M38 0h28c22 8 34 25 34 44S88 81 66 90H38l12-6C70 76 80 62 80 44S70 14 48 5z" fill="#000" />
      <path d="M18 20l12-8 8-1 4 4 6-2 4 4 10-1 5 5 3 10 7 6 3 4-2 8-7 8-1 12-6 8-4 8-8 3-5-12-3-12 1-8-7-7-12 2-9-8-2-11z" fill="#70be46" />
      <circle cx="68" cy="48" r="3.2" fill="#c5e4f5" />
      <text x="17" y="42" textLength="60" lengthAdjust="spacingAndGlyphs" fontFamily="Lato, sans-serif" fontWeight="700" fontSize="19" fill="#111">APHRC</text>
    </Logo>
  );
}

export default function App() {
  return (
    <Page>
      <GlobalStyle />
      <Header>
        <AphrcLogo />
        <Divider />
        <Welcome>
          Welcome to the African
          <br />
          Population and Health Research Centre.
        </Welcome>
        <Nav>
          <NavLink>Data Entry</NavLink>
          <NavLink>Data Import</NavLink>
          <NavLink>Data Report</NavLink>
        </Nav>
      </Header>
      <Main>
        <TabBar>
          {TABS.map(([name, spacing], i) => (
            <Tab key={name} $active={i === 1} $spacing={spacing}>{name}</Tab>
          ))}
        </TabBar>
        <Card>
          <CardHeader>
            <CardTitle>Countries With Total Projects Available</CardTitle>
            <ExpandIcon viewBox="0 0 42 42" fill="none" stroke="#fff" strokeWidth="3">
              <path d="M1.5 15V1.5H14M28 1.5h12.500V15M40.500 27v13.500H28M14 40.500H1.500V27" />
            </ExpandIcon>
          </CardHeader>
          <ChartPanel>
            <ChartHead>
              <ChartTitle>Indicator Performance Across Time (Active Projects)</ChartTitle>
              <MenuIcon viewBox="0 0 34 28" stroke="#666" strokeWidth="5.500" strokeLinecap="round">
                <path d="M3 4h28M3 14h28M3 24h28" />
              </MenuIcon>
            </ChartHead>
            <ChartBody>
              <ZoomGroup>
                <ZoomButton>
                  <svg width="20" height="20" stroke="#333" strokeWidth="2.800"><path d="M10 1v18M1 10h18" /></svg>
                </ZoomButton>
                <ZoomButton>
                  <svg width="20" height="20" stroke="#333" strokeWidth="2.800"><path d="M3 10h14" /></svg>
                </ZoomButton>
              </ZoomGroup>
              <WorldMap />
              <PanelWrap>
                <Panel>
                  <Fact>Country: <b>Nigeria</b></Fact>
                  <Fact>Code: <b>NIG</b></Fact>
                  <Fact>Active Project: <b>2</b></Fact>
                  <Rule />
                  <Donor $height={122} $top={0}>
                    <DonorName>IDRC</DonorName>
                    <ProjectRow><span>I.</span><span>KIX–Learning Through Play</span></ProjectRow>
                  </Donor>
                  <Donor $height={130} $top={9}>
                    <DonorName>AIDS</DonorName>
                    <ProjectRow $spacing={0.2}><span>I.</span><span>SIDA SUPPORT CARD 2017</span></ProjectRow>
                  </Donor>
                </Panel>
                <CloseButton>
                  <svg width="26" height="26" fill="none" stroke="#000" strokeWidth="2.600" strokeLinecap="round">
                    <path d="M2 2l22 22M24 2L2 24" />
                  </svg>
                </CloseButton>
              </PanelWrap>
            </ChartBody>
            <Legend>
              <LegendTitle>Number of Active Projects in a country</LegendTitle>
              <Ramp><RampCell /><RampCell /><RampCell $last /></Ramp>
              <RampLabels><span>0</span><span>25</span><span>50</span><span>75</span></RampLabels>
            </Legend>
          </ChartPanel>
        </Card>
      </Main>
      <Footer>
        <FooterText $spacing={2}>Built with</FooterText>
        <svg width="28" height="28" viewBox="0 0 28 28">
          <defs>
            <linearGradient id="heart" x1="0" y1="0" x2="0" y2="1">
              <stop offset="0" stopColor="#f2f2f2" />
              <stop offset="1" stopColor="#cfcfcf" />
            </linearGradient>
          </defs>
          <path d="M14 27C10 20 .5 16 .5 8.500C.5 4 3.500 1 7.500 1C10.500 1 13 3 14 6C15 3 17.500 1 20.500 1C24.500 1 27.500 4 27.500 8.500C27.500 16 18 20 14 27Z" fill="url(#heart)" />
        </svg>
        <FooterText $spacing={1.6}>by ehealth4everyone</FooterText>
      </Footer>
    </Page>
  );
}
